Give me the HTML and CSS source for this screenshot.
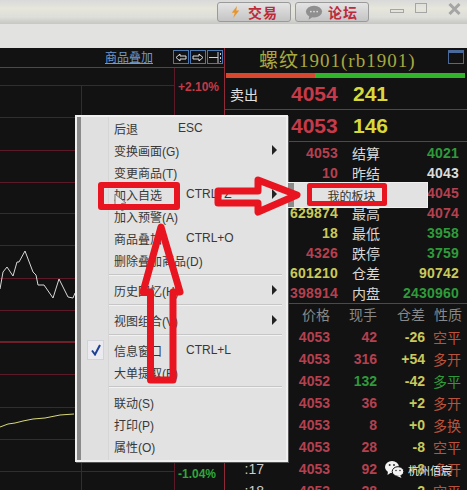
FILE: index.html
```html
<!DOCTYPE html>
<html lang="en">
<head>
    <meta charset="UTF-8">
    <meta name="viewport" content="width=device-width, initial-scale=1.0">
    <title>螺纹1901</title>
    <link rel="stylesheet" href="styles.css">
</head>
<body>
    <div class="app">
        <div class="titlebar">
            <button class="tool-btn trade">
                <svg class="tool-icon" width="9" height="16" viewBox="0 0 12 16"><path d="M8 0 L1 9 H5 L3 16 L11 6 H7 Z" fill="#e8962c"/></svg>
                交易
            </button>
            <button class="tool-btn forum">
                <svg class="tool-icon" width="18" height="15" viewBox="0 0 20 16"><ellipse cx="10" cy="7" rx="9" ry="6.5" fill="#8f8f8f"/><path d="M5 11 L4 16 L10 12 Z" fill="#8f8f8f"/><circle cx="6.5" cy="7" r="1" fill="#ddd"/><circle cx="10" cy="7" r="1" fill="#ddd"/><circle cx="13.5" cy="7" r="1" fill="#ddd"/></svg>
                论坛
            </button>
            <div class="win-controls">
                <span class="win-min"></span>
                <span class="win-max"></span>
                <svg class="win-close" width="13" height="12" viewBox="0 0 13 12"><path d="M1.5 1 L11.5 11 M11.5 1 L1.5 11" stroke="#a5a5a5" stroke-width="3"/></svg>
            </div>
        </div>
        <div class="subbar"></div>

        <div class="terminal">
            <div class="chart">
                <div class="chart-head">
                    <a class="overlay-link">商品叠加</a>
                    <div class="chart-btns">
                        <span class="chart-btn"><svg width="12" height="9" viewBox="0 0 12 9"><path d="M1 4.5 L5 1 V3 H11 V6 H5 V8 Z" fill="none" stroke="#ddd"/></svg></span>
                        <span class="chart-btn"><svg width="12" height="9" viewBox="0 0 12 9"><path d="M11 4.5 L7 1 V3 H1 V6 H7 V8 Z" fill="none" stroke="#ddd"/></svg></span>
                        <span class="chart-btn"><svg width="13" height="11" viewBox="0 0 13 11"><path d="M0 5.5 H9 M9 0 V11 M11.5 1 V3 M11.5 5 V7 M11.5 9 V10" fill="none" stroke="#ccd"/></svg></span>
                    </div>
                </div>
                <div class="chart-body">
                    <svg class="chart-lines" width="224" height="423" viewBox="0 67 224 423">
                        <g stroke="#5c1a28" stroke-width="1">
                            <path d="M0 85.5 H174 M0 117.5 H174 M0 150.5 H174 M0 182.5 H174 M0 213.5 H174 M0 245.5 H174 M0 278.5 H174 M0 310.5 H174 M0 374.5 H174 M0 407.5 H174 M0 439.5 H174 M0 471.5 H174"/>
                            <path d="M81.5 85 V490 M174.5 67 V490"/>
                        </g>
                        <path d="M0 67.5 H224" stroke="#8f2a38"/>
                        <path d="M0 342 H174" stroke="#6e1f2a" stroke-width="2"/>
                        <polyline fill="none" stroke="#d8d8d8" points="0,289 3,272 7,267 13,276 17,262 19,262 25,251 33,272 36,275 38,285 44,285 53,298 59,279 68,297 73,298 75,293"/>
                        <polyline fill="none" stroke="#d8d878" points="0,427 8,424 15,423 23,421 33,419 45,418 50,417 60,415 74,414"/>
                    </svg>
                    <span class="pct up">+2.10%</span>
                    <span class="pct down">-1.04%</span>
                </div>
            </div>

            <div class="quote">
                <div class="quote-title">
                    <span>螺纹1901(rb1901)</span>
                    <span class="title-btn"></span>
                </div>
                <div class="ratio-bar"><span class="ratio-sell"></span><span class="ratio-buy"></span></div>
                <div class="book-row">
                    <span class="book-label">卖出</span><span class="book-price">4054</span><span class="book-vol">241</span>
                </div>
                <div class="book-row">
                    <span class="book-label">买入</span><span class="book-price">4053</span><span class="book-vol">146</span>
                </div>

                <div class="stats">
                    <span class="red">4053</span><span class="stat-label">结算</span><span class="green">4021</span>
                    <span class="red">10</span><span class="stat-label">昨结</span><span class="white">4043</span>
                    <span></span><span class="stat-label"></span><span class="red">4045</span>
                    <span class="yellow">629874</span><span class="stat-label">最高</span><span class="red">4074</span>
                    <span class="yellow">18</span><span class="stat-label">最低</span><span class="green">3958</span>
                    <span class="red">4326</span><span class="stat-label">跌停</span><span class="green">3759</span>
                    <span class="yellow">601210</span><span class="stat-label">仓差</span><span class="yellow">90742</span>
                    <span class="red">398914</span><span class="stat-label">内盘</span><span class="green">2430960</span>
                </div>

                <div class="trades">
                    <span></span><span class="head">价格</span><span class="head">现手</span><span class="head">仓差</span><span class="head kind">性质</span>
                    <span></span><span class="red">4053</span><span class="red">42</span><span class="yellow">-26</span><span class="kind orange">空平</span>
                    <span></span><span class="red">4053</span><span class="red">316</span><span class="yellow">+54</span><span class="kind orange">多开</span>
                    <span></span><span class="red">4052</span><span class="green">132</span><span class="yellow">-42</span><span class="kind green">多平</span>
                    <span></span><span class="red">4053</span><span class="red">36</span><span class="yellow">+2</span><span class="kind orange">多开</span>
                    <span></span><span class="red">4053</span><span class="red">8</span><span class="yellow">+0</span><span class="kind orange">多换</span>
                    <span></span><span class="red">4053</span><span class="red">28</span><span class="yellow">-8</span><span class="kind orange">空平</span>
                    <span class="time">:17</span><span class="red">4053</span><span class="red">92</span><span class="yellow">+8</span><span class="kind orange">多开</span>
                    <span class="time">:18</span><span class="red">4053</span><span class="red">28</span><span class="yellow">-2</span><span class="kind orange">空平</span>
                </div>
            </div>
        </div>

        <div class="menu">
            <div class="item"><span class="label short">后退</span><span>ESC</span></div>
            <div class="item"><span class="label">变换画面(G)</span><i class="sub-arrow"></i></div>
            <div class="item"><span class="label">变更商品(T)</span></div>
            <div class="item"><span class="label">加入自选</span><span>CTRL+Z</span><i class="sub-arrow"></i></div>
            <div class="item"><span class="label">加入预警(A)</span></div>
            <div class="item"><span class="label">商品叠加</span><span>CTRL+O</span></div>
            <div class="item"><span class="label">删除叠加商品(D)</span></div>
            <div class="sep"></div>
            <div class="item"><span class="label">历史回忆(H)</span><i class="sub-arrow"></i></div>
            <div class="sep"></div>
            <div class="item"><span class="label">视图组合(V)</span><i class="sub-arrow"></i></div>
            <div class="sep"></div>
            <div class="item">
                <span class="check"><svg width="12" height="12" viewBox="0 0 12 12"><path d="M2 6.5 L5 10.5 L10 1" fill="none" stroke="#1c3f94" stroke-width="2"/></svg></span>
                <span class="label">信息窗口</span><span>CTRL+L</span>
            </div>
            <div class="item"><span class="label">大单提取(B)</span></div>
            <div class="sep"></div>
            <div class="item"><span class="label">联动(S)</span></div>
            <div class="item"><span class="label">打印(P)</span></div>
            <div class="item"><span class="label">属性(O)</span></div>
        </div>

        <div class="submenu">我的板块</div>

        <svg class="marks" width="467" height="490" viewBox="0 0 467 490">
            <path d="M115 194 V208 L118.500 205 L122 211 L125 209 L121.500 203.500 L126 203 Z" fill="#e8e8e8" stroke="#777"/>
            <g fill="none" stroke="#e8141f" stroke-linejoin="round">
                <rect x="101" y="185" width="76" height="22" stroke-width="6"/>
                <rect x="309.500" y="185.500" width="75" height="18" stroke-width="5"/>
                <path d="M218 191 H258 V180 L297 195 L258 212 V203 H218 Z" stroke-width="7"/>
                <path d="M150.500 380 V292 H143 L161 227 L180 292 H173 V380 Z" stroke-width="7"/>
            </g>
        </svg>

        <div class="watermark">
            <svg width="19" height="18" viewBox="0 0 19 18">
                <ellipse cx="7" cy="7" rx="7" ry="6" fill="#f4f4f4"/>
                <path d="M3 11 L2.500 15 L7 12 Z" fill="#f4f4f4"/>
                <ellipse cx="13" cy="11.500" rx="5.800" ry="4.800" fill="#f4f4f4" stroke="#111" stroke-width="1"/>
                <path d="M15 15 L16.500 18 L12 16 Z" fill="#f4f4f4"/>
                <circle cx="4.700" cy="5" r="1" fill="#333"/><circle cx="9" cy="5" r="1" fill="#333"/>
                <circle cx="11" cy="10.500" r=".8" fill="#333"/><circle cx="15" cy="10.500" r=".8" fill="#333"/>
            </svg>
            <span>杭州佰宸</span>
        </div>
    </div>
</body>
</html>
```

FILE: styles.css
```css
html, body {
    margin: 0;
    padding: 0;
    background: #121212;
}
body {
    font-family: "Liberation Sans", "Noto Sans CJK SC", sans-serif;
    overflow: hidden;
}
.app {
    position: relative;
    width: 467px;
    height: 490px;
    overflow: hidden;
}

/* top window bar */
.titlebar {
    height: 24px;
    display: flex;
    align-items: flex-start;
    padding: 2px 0 0 217px;
    box-sizing: border-box;
    gap: 4px;
    background: linear-gradient(#d9d9d9 0, #e6e6dc 35%, #dededa 70%, #c6c6c2 100%);
}
.tool-btn {
    width: 74px;
    height: 20px;
    padding: 0 0 0 13px;
    display: flex;
    align-items: center;
    gap: 8px;
    border: 1px solid #9a9a9a;
    border-radius: 3px;
    background: linear-gradient(#e4e4e4, #c4c4c4);
    font-family: "Noto Sans CJK SC", sans-serif;
    font-size: 14px;
    font-weight: bold;
    letter-spacing: 1px;
    color: #bd2b3a;
}
.forum {
    padding-left: 9px;
    gap: 5px;
}
.tool-icon {
    flex: none;
}
.win-controls {
    display: flex;
    align-items: flex-start;
    margin-left: 17px;
    padding-top: 1px;
}
.win-min {
    width: 12px;
    height: 2px;
    margin-top: 6px;
    border: 1px solid #a5a5a5;
}
.win-max {
    width: 10px;
    height: 8px;
    margin-left: 11px;
    border: 1px solid #a5a5a5;
}
.win-close {
    margin-left: 21px;
}
.subbar {
    height: 24px;
    background: #e2e2e0;
}

/* black trading area */
.terminal {
    display: flex;
    height: 442px;
    background: #121212;
}
.chart {
    flex: none;
    width: 224px;
    border-right: 1px solid #8f2a38;
}
.chart-head {
    height: 19px;
    display: flex;
    align-items: flex-start;
    justify-content: flex-end;
}
.overlay-link {
    margin: 3px 20px 0 0;
    font-size: 12px;
    line-height: 14px;
    color: #6e9ad0;
    text-decoration: underline;
}
.chart-btns {
    display: flex;
    gap: 1px;
    padding: 2px 1px 0 0;
}
.chart-btn {
    width: 14px;
    height: 12px;
    display: flex;
    align-items: center;
    justify-content: center;
    border: 1px solid #4a78b0;
}
.chart-body {
    position: relative;
    height: 423px;
}
.chart-lines {
    display: block;
}
.pct {
    position: absolute;
    left: 178px;
    font-size: 12px;
    font-weight: bold;
    line-height: 14px;
}
.pct.up {
    top: 13px;
    color: #c23a48;
}
.pct.down {
    top: 400px;
    color: #2fa83a;
}

/* right quote panel */
.quote {
    flex: 1;
    min-width: 0;
    overflow: hidden;
    font-size: 14px;
    font-weight: bold;
}
.quote-title {
    position: relative;
    height: 25px;
    padding-left: 34px;
    font-family: "Liberation Serif", "Noto Sans CJK SC", serif;
    font-size: 19px;
    font-weight: normal;
    line-height: 25px;
    letter-spacing: 1px;
    color: #a8a83e;
}
.title-btn {
    position: absolute;
    right: 3px;
    top: 2px;
    width: 14px;
    height: 10px;
    border: 1px solid #4a6a9c;
    border-top-width: 3px;
}
.ratio-bar {
    display: flex;
    height: 5px;
    margin: 0 2px 0 1px;
}
.ratio-sell {
    width: 89px;
    background: #d9472f;
}
.ratio-buy {
    flex: 1;
    background: #2fb42a;
}
.book-row {
    display: flex;
    align-items: center;
    height: 31px;
    border-bottom: 1px solid #8f2a38;
    font-size: 21px;
}
.book-label {
    width: 61px;
    padding-left: 5px;
    font-family: "Noto Sans CJK SC", sans-serif;
    font-size: 14px;
    font-weight: normal;
    color: #e0e0e0;
}
.book-price {
    width: 47px;
    color: #c63a4a;
}
.book-vol {
    margin-left: 15px;
    color: #d8d83a;
}
.stats {
    display: grid;
    grid-template-columns: 113px 28px 1fr;
    grid-auto-rows: 20px;
    column-gap: 14px;
    padding: 1px 8px 0 0;
    border-bottom: 1px solid #8f2a38;
    line-height: 20px;
    letter-spacing: .2px;
    text-align: right;
}
.stat-label, .head, .kind {
    font-family: "Noto Sans CJK SC", sans-serif;
    font-weight: normal;
}
.stat-label {
    text-align: left;
    letter-spacing: 0;
    white-space: nowrap;
    color: #d8d8d8;
}
.trades {
    display: grid;
    grid-template-columns: 55px 50px 47px 48px auto;
    grid-auto-rows: 22px;
    line-height: 22px;
    text-align: right;
}
.head {
    color: #888;
    height: 21px;
    line-height: 21px;
}
.kind {
    padding-left: 8px;
    text-align: left;
}
.head.kind {
    padding-left: 9px;
}
.time {
    padding-right: 16px;
    color: #ccc;
    font-weight: normal;
}
.red { color: #b5404f; }
.green { color: #2f9a3a; }
.white { color: #dcdcdc; }
.yellow { color: #c9c95c; }
.orange { color: #b8523c; }

/* popup menus */
.menu {
    position: absolute;
    left: 75px;
    top: 115px;
    width: 213px;
    box-sizing: border-box;
    padding: 0 0 3px;
    border: 2px solid #f0f0f0;
    box-shadow: 1px 1px 0 #555;
    background: linear-gradient(90deg, #8a8a8a 0, #8a8a8a 4px, #e0e0e0 4px, #e0e0e0 31px, #d6d6d6 31px, #d6d6d6 32px, #e2e2e2 32px);
    font-size: 12px;
    color: #383838;
}
.item {
    position: relative;
    display: flex;
    align-items: center;
    height: 22px;
    padding-left: 37px;
}
.label {
    width: 72px;
    flex: none;
    white-space: nowrap;
}
.label.short {
    width: 64px;
}
.sub-arrow {
    position: absolute;
    right: 9px;
    top: 6px;
    border-left: 5px solid #222;
    border-top: 5px solid transparent;
    border-bottom: 5px solid transparent;
}
.sep {
    height: 8px;
    box-sizing: border-box;
    margin: 0 4px 0 32px;
    border-bottom: 0;
    background: linear-gradient(transparent 3px, #c6c6c6 3px, #c6c6c6 4px, #f2f2f2 4px, #f2f2f2 5px, transparent 5px);
}
.check {
    position: absolute;
    left: 10px;
    top: 1px;
    width: 17px;
    height: 20px;
    display: flex;
    align-items: center;
    justify-content: center;
    box-sizing: border-box;
    border: 1px solid #d2d2da;
    background: #ebebef;
}
.submenu {
    position: absolute;
    left: 287px;
    top: 182px;
    width: 141px;
    height: 26px;
    box-sizing: border-box;
    display: flex;
    align-items: center;
    justify-content: center;
    padding: 0 12px 0 0;
    border: 1px solid #f0f0f0;
    background: linear-gradient(90deg, #8a8a8a 0, #8a8a8a 6px, #e2e2e2 6px);
    font-size: 12px;
    color: #333;
}

/* red annotations and cursor on top of the menus */
.marks {
    position: absolute;
    left: 0;
    top: 0;
    pointer-events: none;
}
.watermark {
    position: absolute;
    left: 385px;
    top: 460px;
    display: flex;
    align-items: flex-start;
    gap: 4px;
    font-size: 11px;
    line-height: 14px;
    color: #f0f0f0;
    text-shadow: 0 0 2px #000;
}
.watermark span {
    padding-top: 4px;
    white-space: nowrap;
}
```
